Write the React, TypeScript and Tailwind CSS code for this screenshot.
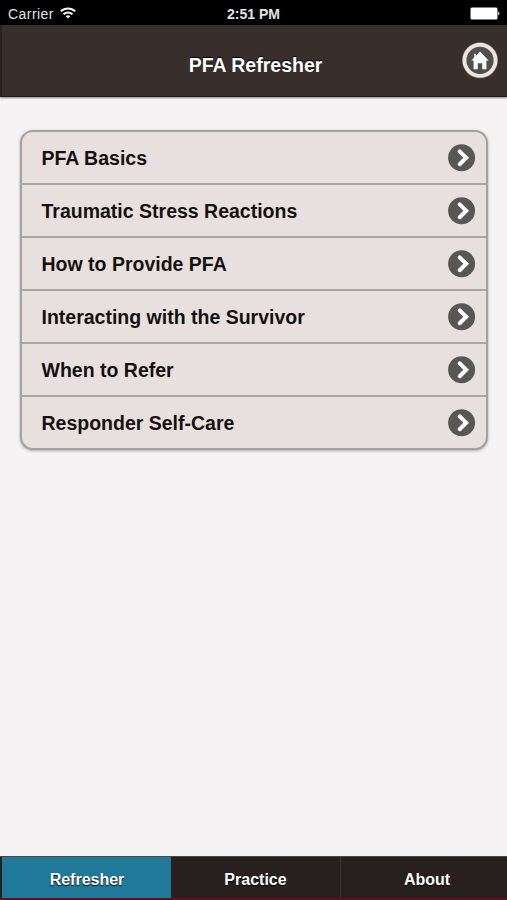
const topics = [
  { label: 'PFA Basics' },
  { label: 'Traumatic Stress Reactions' },
  { label: 'How to Provide PFA' },
  { label: 'Interacting with the Survivor' },
  { label: 'When to Refer' },
  { label: 'Responder Self-Care' },
];

const StatusBar = () => (
  <div className="grid h-[25px] shrink-0 grid-cols-3 items-center bg-black pt-[3px] text-[14px] leading-none text-[#e4e4e4]">
    <div className="flex items-center gap-[6px] pl-2">
      <span className="tracking-[0.45px]">Carrier</span>
      <svg width="16" height="12" viewBox="0 0 16 12" className="-mt-[3px]" fill="none" stroke="#f2f2f2" strokeWidth="2">
        <path d="M0.8 4.4a10.2 10.2 0 0 1 14.4 0" />
        <path d="M3.5 7.3a6.4 6.4 0 0 1 9 0" />
        <path d="M8 11.6 5.7 9.3a3.3 3.3 0 0 1 4.6 0z" fill="#f2f2f2" stroke="none" />
      </svg>
    </div>
    <span className="text-center text-[14px] font-bold">2:51 PM</span>
    <div className="flex justify-end pr-[7px]">
      <svg width="30" height="13" viewBox="0 0 30 13" className="-mt-[2px]" fill="#fff">
        <rect x="0.5" y="0.5" width="27" height="12" rx="1.5" />
        <path d="M28.3 4.5c1.6.5 1.6 3.5 0 4z" />
      </svg>
    </div>
  </div>
);

const Header = () => (
  <header className="relative z-10 flex h-[72px] shrink-0 items-center justify-center border-b border-l-2 border-b-[#1d1918] border-l-[#292220] bg-[#382f2d] pt-[10px] shadow-[0_1px_2px_rgba(0,0,0,0.45)]">
    <h1 className="pl-[2px] text-[19.5px] font-bold leading-none text-white [text-shadow:0_-1px_1px_#000]">PFA Refresher</h1>
    <button className="absolute right-[8px] top-[16px]" aria-label="Home">
      <svg width="38" height="38" viewBox="0 0 38 38" className="block">
        <circle cx="19" cy="19.3" r="18.2" fill="#5d5552" />
        <circle cx="19" cy="19.3" r="17.5" fill="#ebe4e1" />
        <circle cx="19" cy="19.3" r="13.6" fill="#51504e" />
        <path d="M19 10.6 27.6 19.4H25.4V28.2H21.2V22.2H16.8V28.2H12.6V19.4H10.4L13.2 16.5V12.8H14.8V14.9Z" fill="#fff" />
      </svg>
    </button>
  </header>
);

const Chevron = () => (
  <svg width="28" height="28" viewBox="0 0 28 28" className="shrink-0">
    <circle cx="13.6" cy="13.8" r="13.5" fill="#595754" />
    <path d="M11.7 7.4 18.2 13.8 11.7 20.2" fill="none" stroke="#fff" strokeWidth="4" strokeLinecap="round" />
  </svg>
);

const App = () => {
  return (
    <div className="flex h-[900px] w-[507px] flex-col overflow-hidden bg-[#f5f3f4] font-['Liberation_Sans',Arial,sans-serif]">
      <StatusBar />
      <Header />

      <main className="flex-1 pl-[20px] pr-[19px] pt-[33px]">
        <ul className="overflow-hidden rounded-[13px] border-2 border-[#a5a19f] bg-[#e8e0de] shadow-[0_1px_3px_rgba(0,0,0,0.3)]">
          {topics.map((topic) => (
            <li
              key={topic.label}
              className="flex h-[53px] items-center justify-between border-b-2 border-[#aaa5a3] pl-[19.5px] pr-[10px] last:h-[51px] last:border-b-0"
            >
              <span className="pt-[2px] text-[19.5px] font-bold leading-none text-[#15110f]">{topic.label}</span>
              <Chevron />
            </li>
          ))}
        </ul>
      </main>

      {/* Bottom tabs */}
      <nav className="grid h-[44px] shrink-0 grid-cols-[171px_170px_1fr] border-b-2 border-t border-b-[#650d20] border-t-[#4a4644] bg-[#27201e] text-[16px] font-bold leading-none text-white [text-shadow:0_1px_1px_#000]">
        <div className="flex items-center justify-center border-l-2 border-[#24201f] bg-[#207998] pl-px pt-[4px]">Refresher</div>
        <div className="flex items-center justify-center border-r border-[#3a3331] pt-[4px]">Practice</div>
        <div className="flex items-center justify-center pl-[6px] pt-[4px]">About</div>
      </nav>
    </div>
  );
};

export default App;
